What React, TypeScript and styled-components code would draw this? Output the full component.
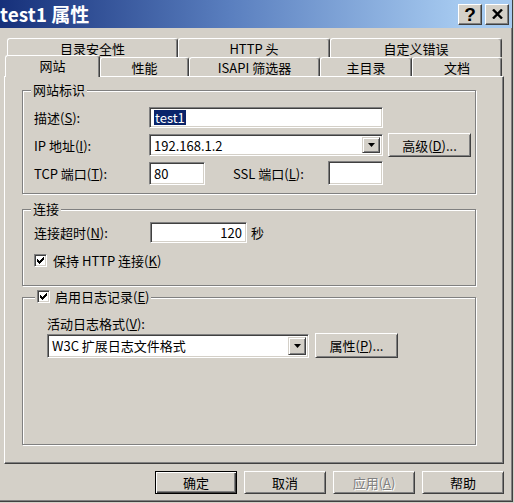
import React from 'react';
import styled, { createGlobalStyle } from 'styled-components';

const GlobalStyle = createGlobalStyle`
  html, body {
    margin: 0;
    padding: 0;
    background: #d4d0c8;
  }
  body {
    font-family: "Noto Sans CJK SC", "Liberation Sans", sans-serif;
    font-size: 13px;
    line-height: 15px;
    color: #000;
  }
  u { text-decoration: underline; text-underline-offset: 1px; }
`;

const Window = styled.div`
  box-sizing: border-box;
  width: 513px;
  height: 502px;
  background: #d4d0c8;
  border-right: 1px solid #404040;
  border-bottom: 1px solid #404040;
  box-shadow: inset -1px -1px 0 #808080;
  overflow: hidden;
`;

const TitleBar = styled.div`
  height: 28px;
  display: flex;
  align-items: center;
  justify-content: space-between;
  background: linear-gradient(to right, #16307a, #5a7fbf 45%, #a6caf0 90%);
`;

const TitleText = styled.div`
  color: #fff;
  font-weight: bold;
  font-size: 19px;
  line-height: 22px;
  white-space: nowrap;
`;

const CaptionButtons = styled.div`
  display: flex;
  gap: 3px;
  margin-right: 3px;
`;

const CaptionButton = styled.div`
  box-sizing: border-box;
  width: 24px;
  height: 21px;
  display: flex;
  align-items: center;
  justify-content: center;
  background: #d4d0c8;
  border-top: 1px solid #fff;
  border-left: 1px solid #fff;
  border-right: 1px solid #404040;
  border-bottom: 1px solid #404040;
  box-shadow: inset -1px -1px 0 #808080;
  font-family: "Liberation Sans", sans-serif;
  font-weight: bold;
  font-size: 19px;
  line-height: 19px;
`;

const Body = styled.div`
  padding: 10px 0 0 4px;
`;

const TabRow = styled.div<{ $indent: number }>`
  display: flex;
  align-items: flex-end;
  height: 19px;
  padding-left: ${p => p.$indent}px;
`;

const Tab = styled.div<{ $w: number; $active?: boolean }>`
  position: relative;
  z-index: ${p => (p.$active ? 2 : 0)};
  box-sizing: border-box;
  width: ${p => p.$w}px;
  height: ${p => (p.$active ? 22 : 19)}px;
  margin-top: ${p => (p.$active ? -2 : 0)}px;
  margin-bottom: ${p => (p.$active ? -1 : 0)}px;
  padding-top: 2px;
  text-align: center;
  white-space: nowrap;
  background: #d4d0c8;
  border-top: 1px solid #fff;
  border-left: 1px solid #fff;
  border-right: 1px solid #404040;
  border-radius: 3px 3px 0 0;
  box-shadow: inset -1px 0 0 #808080;
`;

const Panel = styled.div`
  position: relative;
  z-index: 1;
  box-sizing: border-box;
  width: 500px;
  height: 388px;
  padding: 13px 0 0 17px;
  border-top: 1px solid #fff;
  border-left: 1px solid #fff;
  border-right: 1px solid #404040;
  border-bottom: 1px solid #404040;
  box-shadow: inset -1px -1px 0 #808080;
`;

const Group = styled.div<{ $h: number; $mt: number; $pt: number; $pl: number }>`
  position: relative;
  box-sizing: border-box;
  width: 454px;
  height: ${p => p.$h}px;
  margin-top: ${p => p.$mt}px;
  padding: ${p => p.$pt}px 0 0 ${p => p.$pl}px;
  border: 1px solid #808080;
  box-shadow: inset 1px 1px 0 #fff, 1px 1px 0 #fff;
`;

const Legend = styled.div<{ $left: number }>`
  position: absolute;
  top: -9px;
  left: ${p => p.$left}px;
  display: flex;
  align-items: center;
  gap: 5px;
  padding: 0 2px;
  background: #d4d0c8;
  white-space: nowrap;
`;

const Row = styled.div<{ $mt?: number }>`
  display: flex;
  align-items: center;
  margin-top: ${p => p.$mt ?? 0}px;
  white-space: nowrap;
`;

const Label = styled.div<{ $w?: number; $ml?: number }>`
  width: ${p => (p.$w ? `${p.$w}px` : 'auto')};
  margin-left: ${p => p.$ml ?? 0}px;
  white-space: nowrap;
`;

const sunken = `
  box-sizing: border-box;
  background: #fff;
  border-top: 1px solid #808080;
  border-left: 1px solid #808080;
  border-right: 1px solid #fff;
  border-bottom: 1px solid #fff;
  box-shadow: inset 1px 1px 0 #404040, inset -1px -1px 0 #d4d0c8;
`;

const TextBox = styled.div<{ $w: number; $h: number; $right?: boolean; $ml?: number }>`
  ${sunken}
  width: ${p => p.$w}px;
  height: ${p => p.$h}px;
  margin-left: ${p => p.$ml ?? 0}px;
  padding: 0 4px;
  display: flex;
  align-items: center;
  justify-content: ${p => (p.$right ? 'flex-end' : 'flex-start')};
`;

const Selected = styled.span`
  background: #0a246a;
  color: #fff;
  padding: 0 1px;
`;

const Combo = styled.div<{ $w: number; $h: number }>`
  ${sunken}
  width: ${p => p.$w}px;
  height: ${p => p.$h}px;
  padding: 2px 2px 2px 4px;
  display: flex;
  align-items: center;
  justify-content: space-between;
`;

const DropButton = styled.div`
  box-sizing: border-box;
  width: 18px;
  height: 100%;
  display: flex;
  align-items: center;
  justify-content: center;
  background: #d4d0c8;
  border-top: 1px solid #d4d0c8;
  border-left: 1px solid #d4d0c8;
  border-right: 1px solid #404040;
  border-bottom: 1px solid #404040;
  box-shadow: inset 1px 1px 0 #fff, inset -1px -1px 0 #808080;
`;

const PushButton = styled.div<{ $w: number; $h: number; $ml?: number; $default?: boolean; $disabled?: boolean }>`
  box-sizing: border-box;
  width: ${p => p.$w}px;
  height: ${p => p.$h}px;
  margin-left: ${p => p.$ml ?? 0}px;
  display: flex;
  align-items: center;
  justify-content: center;
  background: #d4d0c8;
  white-space: nowrap;
  color: ${p => (p.$disabled ? '#808080' : '#000')};
  text-shadow: ${p => (p.$disabled ? '1px 1px 0 #fff' : 'none')};
  border: 1px solid;
  border-color: ${p => (p.$default ? '#000' : '#fff #404040 #404040 #fff')};
  box-shadow: ${p =>
    p.$default
      ? 'inset 1px 1px 0 #fff, inset -1px -1px 0 #404040, inset -2px -2px 0 #808080'
      : 'inset 1px 1px 0 #d4d0c8, inset -1px -1px 0 #808080'};
`;

const CheckBox = styled.div`
  ${sunken}
  width: 13px;
  height: 13px;
  display: flex;
  align-items: center;
  justify-content: center;
  flex: none;
`;

const ButtonBar = styled.div`
  display: flex;
  justify-content: flex-end;
  gap: 7px;
  width: 500px;
  margin-top: 7px;
`;

const Arrow = () => (
  <svg width="7" height="4" viewBox="0 0 7 4">
    <polygon points="0,0 7,0 3.5,4" fill="#000" />
  </svg>
);

const Check = () => (
  <svg width="7" height="7" viewBox="0 0 7 7" shapeRendering="crispEdges">
    <path d="M0 2h1v3h-1zM1 3h1v3h-1zM2 4h1v3h-1zM3 3h1v3h-1zM4 2h1v3h-1zM5 1h1v3h-1zM6 0h1v3h-1z" fill="#000" />
  </svg>
);

const CloseGlyph = () => (
  <svg width="11" height="10" viewBox="0 0 11 10">
    <path d="M1 0.5 L10 9.5 M10 0.5 L1 9.5" stroke="#000" strokeWidth="2.4" />
  </svg>
);

const topTabs = [
  { label: '目录安全性', w: 171 },
  { label: 'HTTP 头', w: 152 },
  { label: '自定义错误', w: 172 },
];

const bottomTabs = [
  { label: '网站', w: 95, active: true },
  { label: '性能', w: 89 },
  { label: 'ISAPI 筛选器', w: 131 },
  { label: '主目录', w: 92 },
  { label: '文档', w: 90 },
];

export default function App() {
  return (
    <>
      <GlobalStyle />
      <Window>
        <TitleBar>
          <TitleText>test1 属性</TitleText>
          <CaptionButtons>
            <CaptionButton>?</CaptionButton>
            <CaptionButton><CloseGlyph /></CaptionButton>
          </CaptionButtons>
        </TitleBar>
        <Body>
          <TabRow $indent={3}>
            {topTabs.map(t => (
              <Tab key={t.label} $w={t.w}>{t.label}</Tab>
            ))}
          </TabRow>
          <TabRow $indent={1}>
            {bottomTabs.map(t => (
              <Tab key={t.label} $w={t.w} $active={t.active}>{t.label}</Tab>
            ))}
          </TabRow>
          <Panel>
            <Group $h={104} $mt={0} $pt={16} $pl={11}>
              <Legend $left={8}>网站标识</Legend>
              <Row>
                <Label $w={115}>描述(<u>S</u>):</Label>
                <TextBox $w={234} $h={21}><Selected>test1</Selected></TextBox>
              </Row>
              <Row $mt={5}>
                <Label $w={115}>IP 地址(<u>I</u>):</Label>
                <Combo $w={234} $h={22}>
                  <span>192.168.1.2</span>
                  <DropButton><Arrow /></DropButton>
                </Combo>
                <PushButton $w={83} $h={24} $ml={5}>高级(<u>D</u>)...</PushButton>
              </Row>
              <Row $mt={4}>
                <Label $w={115}>TCP 端口(<u>T</u>):</Label>
                <TextBox $w={56} $h={23}>80</TextBox>
                <Label $w={95} $ml={28}>SSL 端口(<u>L</u>):</Label>
                <TextBox $w={55} $h={24} />
              </Row>
            </Group>

            <Group $h={77} $mt={15} $pt={12} $pl={11}>
              <Legend $left={8}>连接</Legend>
              <Row>
                <Label $w={116}>连接超时(<u>N</u>):</Label>
                <TextBox $w={97} $h={21} $right>120</TextBox>
                <Label $ml={4}>秒</Label>
              </Row>
              <Row $mt={10}>
                <CheckBox><Check /></CheckBox>
                <Label $ml={6}>保持 HTTP 连接(<u>K</u>)</Label>
              </Row>
            </Group>

            <Group $h={148} $mt={11} $pt={18} $pl={24}>
              <Legend $left={12}>
                <CheckBox><Check /></CheckBox>
                <span>启用日志记录(<u>E</u>)</span>
              </Legend>
              <Row>
                <Label>活动日志格式(<u>V</u>):</Label>
              </Row>
              <Row $mt={2}>
                <Combo $w={262} $h={24}>
                  <span>W3C 扩展日志文件格式</span>
                  <DropButton><Arrow /></DropButton>
                </Combo>
                <PushButton $w={83} $h={25} $ml={6}>属性(<u>P</u>)...</PushButton>
              </Row>
            </Group>
          </Panel>
          <ButtonBar>
            <PushButton $w={82} $h={23} $default>确定</PushButton>
            <PushButton $w={82} $h={23}>取消</PushButton>
            <PushButton $w={82} $h={23} $disabled>应用(<u>A</u>)</PushButton>
            <PushButton $w={82} $h={23}>帮助</PushButton>
          </ButtonBar>
        </Body>
      </Window>
    </>
  );
}
